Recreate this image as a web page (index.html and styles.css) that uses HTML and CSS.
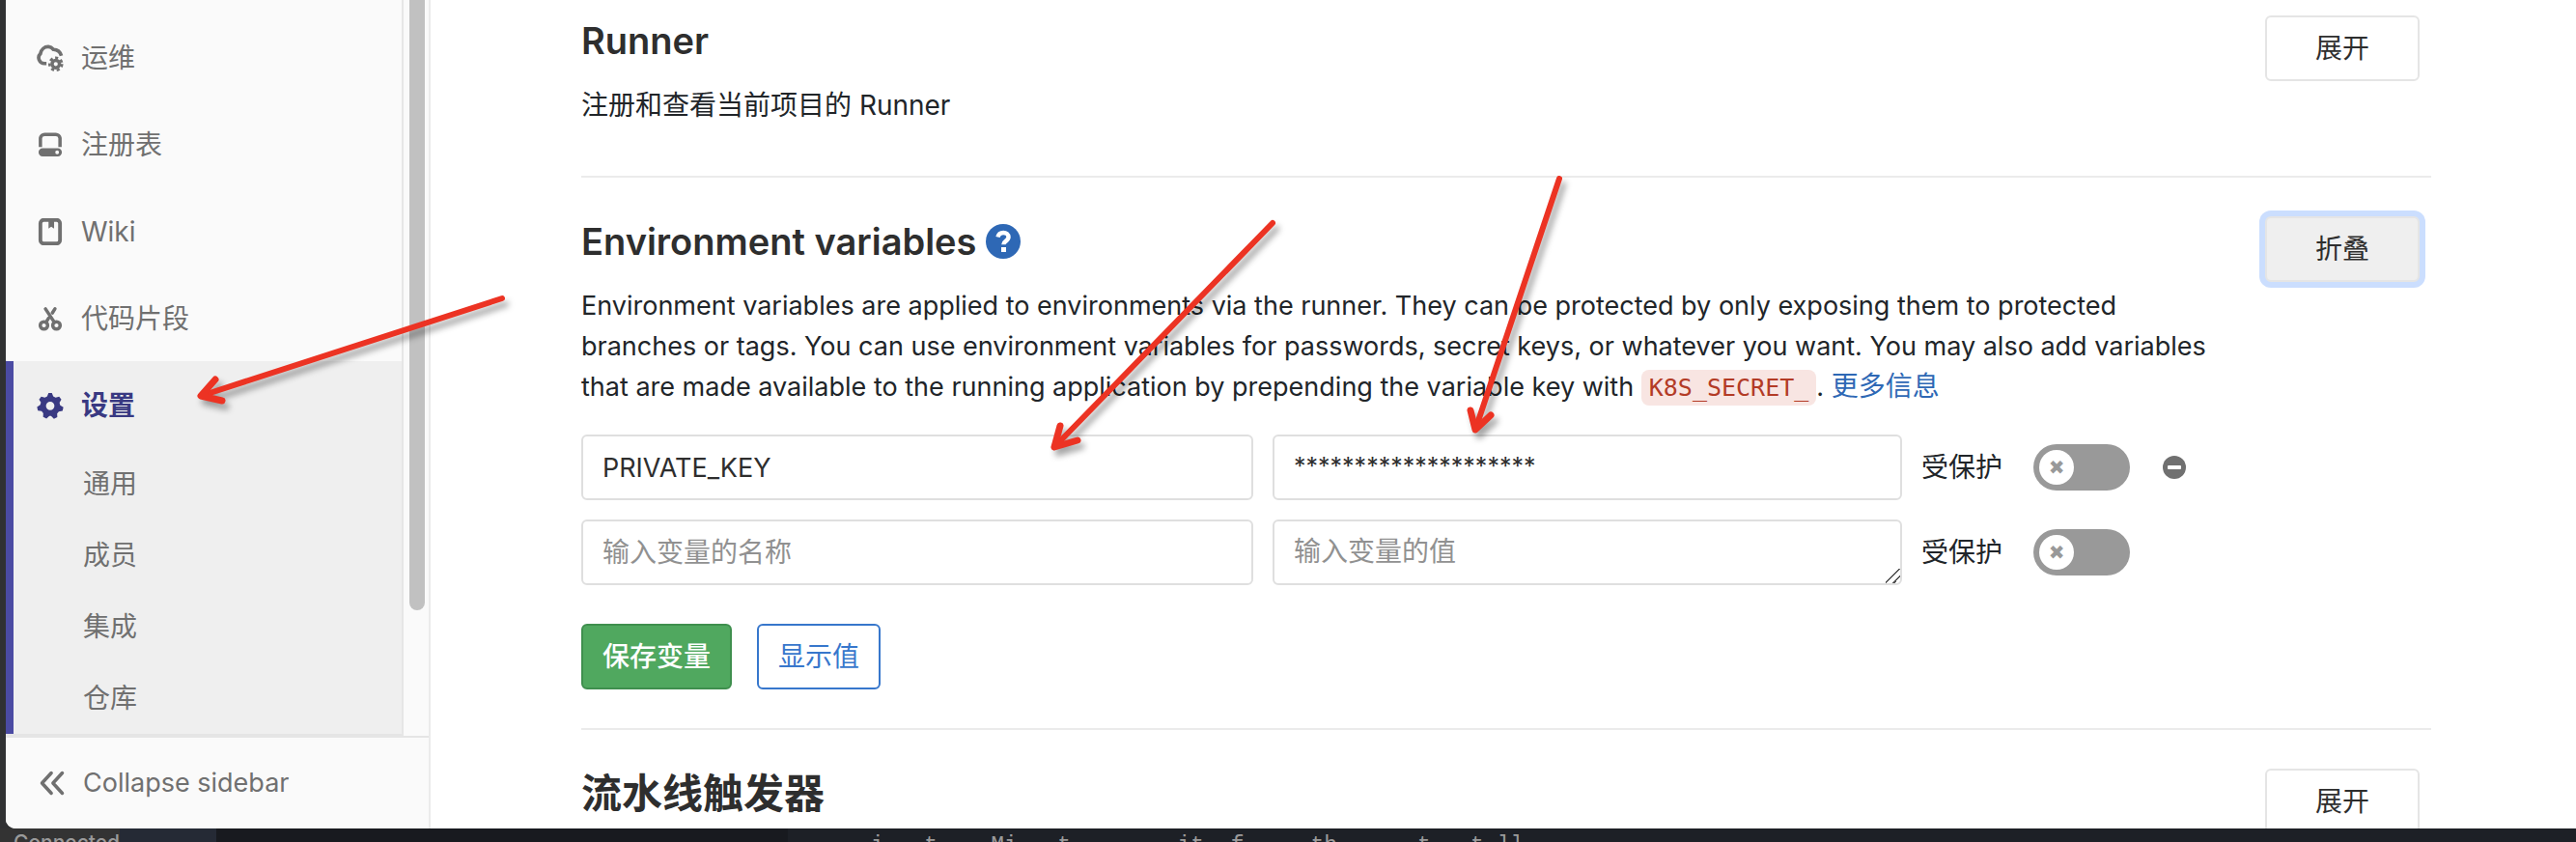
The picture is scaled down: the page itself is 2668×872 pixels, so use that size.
FILE: index.html
```html
<!DOCTYPE html>
<html lang="zh-CN">
<head>
  <meta charset="UTF-8" />
  <meta name="viewport" content="width=device-width, initial-scale=1.0"/>
  <title>CI / CD Settings</title>
  <link rel="stylesheet" href="styles.css">
</head>
<body>
  <div class="window">
    <nav class="sidebar">
      <div class="sidebar-scroll">
        <ul class="menu">
          <li>
            <a href="#">
              <svg class="icon" viewBox="0 0 16 16"><path d="M5.800 11.300H4.600A3.400 3.400 0 0 1 2.200 5.500C2.600 3 4.600 1.300 7 1.400c1.500.1 2.300.9 2.900 1.600 2.500.1 4.100 1.500 4.700 3.700" fill="none" stroke="currentColor" stroke-width="2.100"/><circle cx="11.300" cy="11.600" r="2.200" fill="none" stroke="currentColor" stroke-width="2"/><circle cx="11.300" cy="11.600" r="3.700" fill="none" stroke="currentColor" stroke-width="1.500" stroke-dasharray="1.800 1.520"/></svg>
              <span>运维</span>
            </a>
          </li>
          <li>
            <a href="#">
              <svg class="icon" viewBox="0 0 16 16"><path d="M2.200 9.300V4a2.500 2.500 0 0 1 2.500-2.200h6.600A2.500 2.500 0 0 1 13.800 4v5.300" fill="none" stroke="currentColor" stroke-width="2"/><path fill="currentColor" fill-rule="evenodd" d="M3.500 10h9a2.300 2.300 0 0 1 0 4.800h-9a2.300 2.300 0 0 1 0-4.800zm8.600 1.300a1.100 1.100 0 1 0 0 2.200 1.100 1.100 0 0 0 0-2.200z"/></svg>
              <span>注册表</span>
            </a>
          </li>
          <li>
            <a href="#">
              <svg class="icon" viewBox="0 0 16 16"><rect x="2.200" y="1" width="11.600" height="14" rx="2" fill="none" stroke="currentColor" stroke-width="2.200"/><path fill="currentColor" d="M7 1h3.300v5.200L8.600 5 7 6.200z"/></svg>
              <span>Wiki</span>
            </a>
          </li>
          <li>
            <a href="#">
              <svg class="icon" viewBox="0 0 16 16" fill="none" stroke="currentColor" stroke-width="2"><circle cx="4.300" cy="12" r="2.200"/><circle cx="11.700" cy="12" r="2.200"/><path stroke-linecap="round" d="M5.200 2.200l5.300 8M10.800 2.200l-1.500 2.400M7 7.800l-1.500 2.400"/></svg>
              <span>代码片段</span>
            </a>
          </li>
          <li class="active">
            <a href="#">
              <svg class="icon" viewBox="0 0 16 16"><path fill="currentColor" fill-rule="evenodd" d="M7 .5h2l.8 2.100 1.400.7 2.100-.6 1.300 1.700-1.100 1.900.4 1.500 1.900 1.200-.5 2.200-2.200.3-1 1.200.1 2.200-2 1L8.500 14.200h-1l-1.700 1.500-2-1 .1-2.200-1-1.200-2.200-.3L.2 8.800l1.900-1.200.4-1.500L1.400 4.400l1.300-1.700 2.100.6 1.400-.7zM8 5.700a2.500 2.500 0 1 0 0 5 2.500 2.500 0 0 0 0-5z"/></svg>
              <span>设置</span>
            </a>
            <ul class="submenu">
              <li><a href="#">通用</a></li>
              <li><a href="#">成员</a></li>
              <li><a href="#">集成</a></li>
              <li><a href="#">仓库</a></li>
            </ul>
          </li>
        </ul>
        <div class="scrollbar"><div class="thumb"></div></div>
      </div>
      <button class="collapse-btn" type="button">
        <svg class="icon" viewBox="0 0 16 16" fill="none" stroke="currentColor" stroke-width="2" stroke-linecap="round" stroke-linejoin="round"><path d="M7.500 2L2 8l5.500 6M14 2L8.500 8l5.500 6"/></svg>
        <span>Collapse sidebar</span>
      </button>
    </nav>

    <main class="content">
      <section class="settings">
        <div class="settings-text">
          <h4>Runner</h4>
          <p>注册和查看当前项目的 Runner</p>
        </div>
        <button class="btn btn-toggle" type="button">展开</button>
      </section>

      <section class="settings">
        <div class="settings-text">
          <h4>Environment variables
            <a class="help" href="#" aria-label="Help"><svg viewBox="0 0 36 36"><circle cx="18" cy="18" r="18" fill="currentColor"/><path d="M12.500 13.500c.8-3.200 3-4.500 5.700-4.500 3 0 5.300 1.800 5.300 4.600 0 4-5.100 4-5.100 7.600" fill="none" stroke="#fff" stroke-width="4.500"/><path fill="#fff" d="M16 24h5v5h-5z"/></svg></a>
          </h4>
          <p class="description">Environment variables are applied to environments via the runner. They can be protected by only exposing them to protected branches or tags. You can use environment variables for passwords, secret keys, or whatever you want. You may also add variables that are made available to the running application by prepending the variable key with <code>K8S_SECRET_</code>. <a href="#">更多信息</a></p>
        </div>
        <button class="btn btn-toggle focused" type="button">折叠</button>

        <form class="variables">
          <div class="variable-row">
            <input class="field key" type="text" aria-label="Key" value="PRIVATE_KEY">
            <textarea class="field value masked" rows="1" aria-label="Value">********************</textarea>
            <label for="protected-1">受保护</label>
            <input class="switch" id="protected-1" type="checkbox">
            <button class="remove" type="button" aria-label="Remove"><svg viewBox="0 0 24 24"><circle cx="12" cy="12" r="12" fill="currentColor"/><rect x="5" y="10" width="14" height="4" rx="1" fill="#fff"/></svg></button>
          </div>
          <div class="variable-row">
            <input class="field key" type="text" aria-label="Key" placeholder="输入变量的名称">
            <textarea class="field value" rows="1" aria-label="Value" placeholder="输入变量的值"></textarea>
            <label for="protected-2">受保护</label>
            <input class="switch" id="protected-2" type="checkbox">
          </div>
          <div class="actions">
            <button class="btn btn-success" type="button">保存变量</button>
            <button class="btn btn-info" type="button">显示值</button>
          </div>
        </form>
      </section>

      <section class="settings">
        <div class="settings-text">
          <h4 class="title-zh">流水线触发器</h4>
        </div>
        <button class="btn btn-toggle" type="button">展开</button>
      </section>
    </main>
  </div>

  <footer class="terminal">
    <span class="status">Connected</span>
    <span class="tab"></span>
    <span class="gutter"></span>
    <span class="output">i   t    Mi   t        it  f     th      t   t ll</span>
  </footer>

  <!-- Red pointer arrows over the page -->
  <svg class="arrows" width="2668" height="872" viewBox="0 0 2668 872">
    <g fill="none" stroke="#ec3323" stroke-width="6" stroke-linecap="round" stroke-linejoin="round">
      <path d="M520 309L208 410M1318 231L1092 463M1615 185L1528 445"/>
      <path stroke-width="7" d="M223 393L208 410l22 5M1098 441l-6 22 24-7M1523 425l5 20 16-15"/>
    </g>
  </svg>
</body>
</html>
```
FILE: styles.css
```css
* {
  box-sizing: border-box;
}

body {
  margin: 0;
  height: 100vh;
  display: flex;
  flex-direction: column;
  overflow: hidden;
  background: #303133;
  color: #212529;
  font-family: Inter, "Noto Sans CJK SC", sans-serif;
  font-size: 28px;
  line-height: 42px;
}

button, input, textarea {
  font: inherit;
}

a {
  color: #2e68b5;
  text-decoration: none;
}

ul {
  margin: 0;
  padding: 0;
  list-style: none;
}

.window {
  flex: 1;
  min-height: 0;
  display: flex;
  margin-left: 6px;
  overflow: hidden;
  background: #fff;
  border-bottom-left-radius: 10px;
}

/* Sidebar */
.sidebar {
  flex: none;
  width: 440px;
  display: flex;
  flex-direction: column;
  background: #fafafa;
  border-right: 2px solid #ebebeb;
}

.sidebar-scroll {
  flex: 1;
  min-height: 0;
  display: flex;
}

.menu {
  width: 412px;
  padding-top: 14px;
  border-right: 2px solid #e6e6e6;
}

.menu a {
  display: flex;
  align-items: center;
  gap: 18px;
  height: 90px;
  padding: 2px 0 0 32px;
  color: #707070;
}

.icon {
  width: 28px;
  height: 28px;
}

.menu .active {
  background: #efefef;
  border-bottom: 2px solid #e5e5e5;
  box-shadow: inset 8px 0 #4b4ba3;
}

.menu .active > a {
  color: #393982;
  font-weight: 600;
}

.submenu a {
  height: 74px;
  padding: 0 0 0 80px;
}

.scrollbar {
  width: 16px;
  margin-left: 6px;
}

.thumb {
  height: 83%;
  background: #c1c1c1;
  border-radius: 0 0 8px 8px;
}

.collapse-btn {
  display: flex;
  align-items: center;
  gap: 18px;
  height: 96px;
  padding: 0 0 0 34px;
  border: 0;
  border-top: 2px solid #e5e5e5;
  background: #fafafa;
  color: #707070;
  font-size: 27px;
}

/* Settings sections */
.content {
  flex: 1;
  padding: 0 150px 0 156px;
}

.settings {
  display: grid;
  grid-template-columns: 1fr 160px;
  column-gap: 44px;
  padding: 40px 12px 40px 0;
  border-bottom: 2px solid #ebebeb;
}

.settings:first-child {
  padding: 16px 12px 52px 0;
}

.settings:last-child {
  border-bottom: 0;
}

h4 {
  margin: 0 0 20px;
  color: #2e2e2e;
  font-size: 38px;
  font-weight: 600;
  line-height: 52px;
}

.title-zh {
  font-size: 42px;
}

.settings p {
  margin: 0;
}

.settings .description {
  font-size: 27px;
}

.description a {
  font-size: 28px;
  line-height: 28px;
}

.help svg {
  width: 36px;
  height: 36px;
  vertical-align: -4px;
}

code {
  padding: 4px 8px;
  border-radius: 8px;
  background: #f8e5e2;
  color: #b33b26;
  font-family: "DejaVu Sans Mono", monospace;
  font-size: 25px;
  line-height: 28px;
}

.btn {
  height: 68px;
  padding: 0 20px;
  border: 2px solid #e5e5e5;
  border-radius: 6px;
  background: #fff;
  color: #2e2e2e;
}

.focused {
  background: #efefef;
  box-shadow: 0 0 0 6px #cbdefe;
}

.variables {
  grid-column: 1 / -1;
  padding-top: 28px;
}

.variable-row {
  display: flex;
  align-items: center;
  gap: 20px;
  margin-bottom: 20px;
}

.field {
  height: 68px;
  padding: 10px 20px;
  border: 2px solid #dfdfdf;
  border-radius: 6px;
  background: #fff;
  color: #2e2e2e;
}

.field::placeholder {
  color: #919191;
  font-size: 28px;
}

.key {
  width: 696px;
  font-size: 27px;
}

.value {
  width: 652px;
  overflow: hidden;
}

.value::-webkit-resizer {
  background: linear-gradient(135deg, transparent 46%, #555 46% 53%, transparent 53% 73%, #555 73% 80%, transparent 80%);
}

.masked {
  font-size: 25px;
  resize: none;
}

.switch {
  appearance: none;
  width: 100px;
  height: 48px;
  margin: 0 0 0 12px;
  padding: 6px;
  border-radius: 24px;
  background: #999;
}

.switch::before {
  content: "✖";
  display: block;
  width: 36px;
  height: 36px;
  border-radius: 50%;
  background: #fff;
  color: #999;
  font: 20px/36px "DejaVu Sans", sans-serif;
  text-align: center;
}

.remove {
  display: flex;
  margin-left: 14px;
  padding: 0;
  border: 0;
  background: none;
  color: #707070;
}

.remove svg {
  width: 24px;
  height: 24px;
}

.actions {
  display: flex;
  gap: 26px;
  padding-top: 20px;
}

.btn-success {
  border-color: #3f8f4e;
  background: #50a85f;
  color: #fff;
  font-weight: 500;
}

.btn-info {
  border-color: #3777cc;
  color: #3777cc;
}

/* Strip of the terminal behind the window */
.terminal {
  flex: none;
  display: flex;
  height: 14px;
  overflow: hidden;
  background: #1d2026;
  color: #9a9a9a;
  white-space: pre;
}

.status {
  width: 124px;
  padding-left: 14px;
  background: #333;
  font-size: 21px;
  font-weight: 500;
  line-height: 30px;
}

.tab {
  width: 100px;
  background: #252a35;
}

.gutter {
  width: 592px;
  background: #181a1f;
}

.output {
  padding-left: 86px;
  font-family: "Liberation Mono", monospace;
  font-size: 23px;
  line-height: 36px;
}

.arrows {
  position: absolute;
  top: 0;
  left: 0;
  pointer-events: none;
  filter: drop-shadow(4px 6px 3px rgba(0, 0, 0, 0.35));
}
```
